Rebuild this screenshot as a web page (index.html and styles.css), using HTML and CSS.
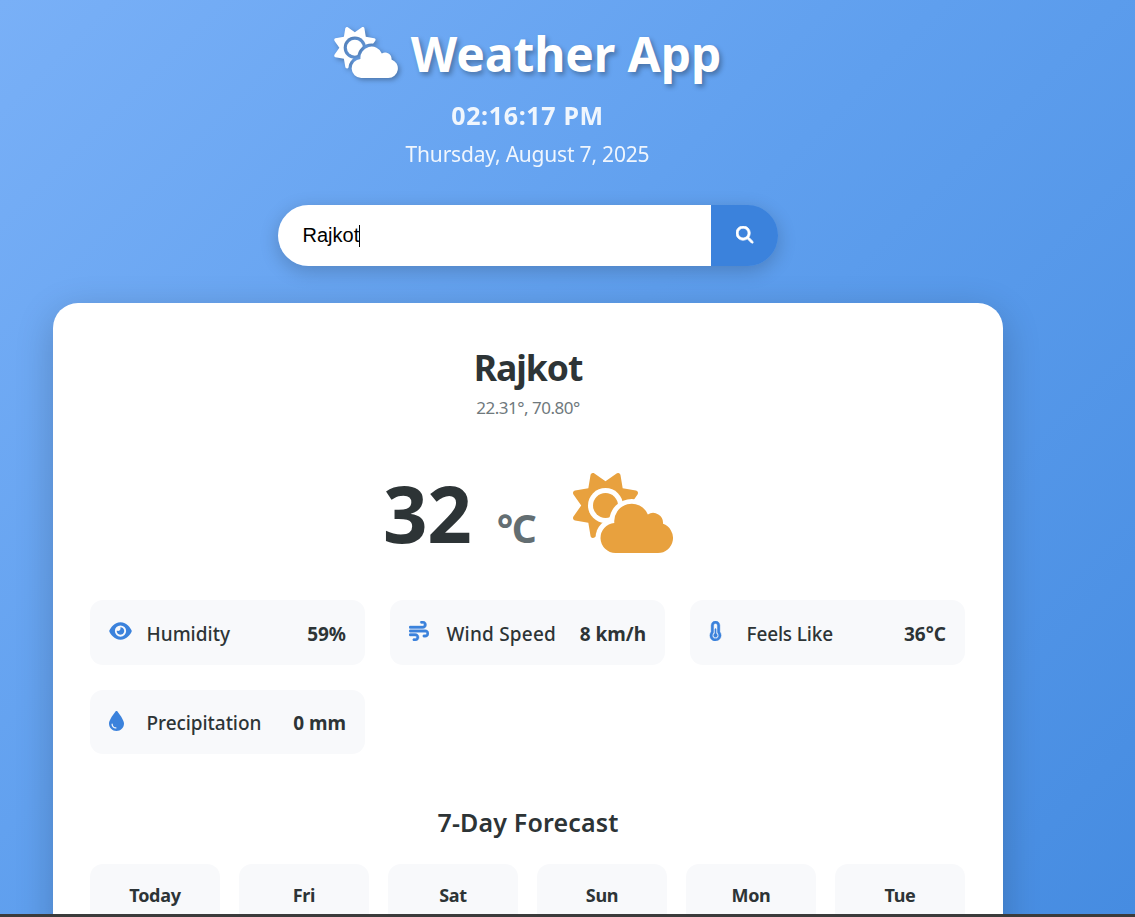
FILE: index.html
```html
<!DOCTYPE html>
<html lang="en">
<head>
<meta charset="utf-8">
<title>Weather App</title>
<link rel="stylesheet" href="styles.css">
</head>
<body>
<svg class="sprite" aria-hidden="true">
  <mask id="sun-cut" maskUnits="userSpaceOnUse" x="0" y="0" width="640" height="512">
    <rect width="640" height="512" fill="#fff"/>
    <circle cx="208" cy="208" r="112" fill="#000"/>
    <circle cx="272" cy="416" r="128" fill="#000"/>
    <circle cx="376" cy="310" r="144" fill="#000"/>
  </mask>
  <mask id="sun-disc-cut" maskUnits="userSpaceOnUse" x="0" y="0" width="640" height="512">
    <rect width="640" height="512" fill="#fff"/>
    <circle cx="376" cy="310" r="144" fill="#000"/>
  </mask>
  <symbol id="cloud-sun" viewBox="0 0 640 512">
    <path mask="url(#sun-cut)" d="M294.2 1.2c5.1 2.1 8.7 6.7 9.6 12.1l14.1 84.7 84.7 14.1c5.4 .9 10 4.5 12.1 9.6s1.5 10.9-1.6 15.4L363.5 208L208 363.5L137.2 413.1c-4.5 3.2-10.3 3.8-15.4 1.6s-8.7-6.7-9.6-12.1L98.1 317.9 13.4 303.8c-5.4-.9-10-4.5-12.1-9.6s-1.5-10.9 1.6-15.4L52.5 208 2.9 137.2c-3.2-4.5-3.8-10.3-1.6-15.4s6.7-8.7 12.1-9.6L98.1 98.1l14.1-84.7c.9-5.4 4.5-10 9.6-12.1s10.9-1.5 15.4 1.6L208 52.5 278.8 2.9c4.5-3.2 10.3-3.8 15.4-1.6z"/>
    <circle cx="208" cy="208" r="80" mask="url(#sun-disc-cut)"/>
    <path d="M272 512a96 96 0 0 1-7.5-191.7A112 112 0 0 1 479 265A64 64 0 0 1 576 325.5A96 96 0 0 1 544 512z"/>
  </symbol>
  <symbol id="search" viewBox="0 0 512 512"><path d="M416 208c0 45.9-14.9 88.3-40 122.7L502.6 457.4c12.5 12.5 12.5 32.8 0 45.3s-32.8 12.5-45.3 0L330.7 376c-34.4 25.2-76.8 40-122.7 40C93.1 416 0 322.9 0 208S93.1 0 208 0S416 93.1 416 208zM208 352a144 144 0 1 0 0-288 144 144 0 1 0 0 288z"/></symbol>
  <symbol id="eye" viewBox="0 0 576 512"><path d="M288 32c-80.8 0-145.5 36.8-192.6 80.6C48.6 156 17.3 208 2.5 243.7c-3.3 7.9-3.3 16.7 0 24.6C17.3 304 48.6 356 95.4 399.4C142.5 443.2 207.2 480 288 480s145.5-36.8 192.6-80.6c46.8-43.5 78.1-95.4 93-131.1c3.3-7.9 3.3-16.7 0-24.6c-14.9-35.7-46.2-87.7-93-131.1C433.5 68.8 368.8 32 288 32zM144 256a144 144 0 1 1 288 0 144 144 0 1 1 -288 0zm144-64c0 35.3-28.7 64-64 64c-7.1 0-13.9-1.2-20.3-3.3c-5.5-1.8-11.9 1.6-11.7 7.4c.3 6.9 1.3 13.8 3.2 20.7c13.7 51.2 66.4 81.6 117.6 67.9s81.6-66.4 67.9-117.6c-11.1-41.5-47.8-69.4-88.6-71.1c-5.8-.2-9.2 6.1-7.4 11.7c2.1 6.4 3.3 13.2 3.3 20.3z"/></symbol>
  <symbol id="wind" viewBox="0 0 512 512"><path d="M288 32c0 17.7 14.3 32 32 32l32 0c17.7 0 32 14.3 32 32s-14.3 32-32 32L32 128c-17.7 0-32 14.3-32 32s14.3 32 32 32l320 0c53 0 96-43 96-96s-43-96-96-96L320 0c-17.7 0-32 14.3-32 32zm64 352c0 17.7 14.3 32 32 32l32 0c53 0 96-43 96-96s-43-96-96-96L32 224c-17.7 0-32 14.3-32 32s14.3 32 32 32l384 0c17.7 0 32 14.3 32 32s-14.3 32-32 32l-32 0c-17.7 0-32 14.3-32 32zM128 512l32 0c53 0 96-43 96-96s-43-96-96-96L32 320c-17.7 0-32 14.3-32 32s14.3 32 32 32l128 0c17.7 0 32 14.3 32 32s-14.3 32-32 32l-32 0c-17.7 0-32 14.3-32 32s14.3 32 32 32z"/></symbol>
  <symbol id="thermometer" viewBox="0 0 320 512"><path d="M160 64c-26.5 0-48 21.5-48 48l0 164.5c0 17.3-7.1 31.9-15.3 42.5C86.2 332.6 80 349.5 80 368c0 44.2 35.8 80 80 80s80-35.8 80-80c0-18.5-6.2-35.4-16.7-48.9c-8.2-10.6-15.3-25.2-15.3-42.5L208 112c0-26.5-21.5-48-48-48zM48 112C48 50.2 98.1 0 160 0s112 50.1 112 112l0 164.4c0 .1 .1 .3 .2 .6c.2 .6 .8 1.6 1.7 2.8c18.9 24.4 30.1 55 30.1 88.1c0 79.5-64.5 144-144 144S16 447.5 16 368c0-33.2 11.2-63.8 30.1-88.1c.9-1.2 1.5-2.2 1.7-2.8c.1-.3 .2-.5 .2-.6L48 112zM208 368c0 26.5-21.5 48-48 48s-48-21.5-48-48c0-20.9 13.4-38.7 32-45.3L144 208c0-8.8 7.2-16 16-16s16 7.2 16 16l0 114.7c18.6 6.6 32 24.4 32 45.3z"/></symbol>
  <symbol id="droplet" viewBox="0 0 384 512"><path d="M192 512C86 512 0 426 0 320C0 228.8 130.2 57.7 166.6 11.7C172.6 4.2 181.5 0 191.1 0l1.8 0c9.6 0 18.5 4.2 24.5 11.7C253.8 57.7 384 228.8 384 320c0 106-86 192-192 192zM96 336c0-8.8-7.2-16-16-16s-16 7.2-16 16c0 61.9 50.1 112 112 112c8.8 0 16-7.2 16-16s-7.2-16-16-16c-44.2 0-80-35.8-80-80z"/></symbol>
</svg>
<div class="page">
  <div class="container">
    <header class="header">
      <h1 class="title"><svg class="title-icon"><use href="#cloud-sun"/></svg><span>Weather App</span></h1>
      <div class="time"><span>02:16:17 PM</span></div>
      <div class="date"><span>Thursday, August 7, 2025</span></div>
    </header>
    <div class="search">
      <div class="search-input">Rajkot<span class="caret"></span></div>
      <button class="search-btn" aria-label="Search"><svg><use href="#search"/></svg></button>
    </div>
    <main class="card">
      <h2 class="city"><span>Rajkot</span></h2>
      <p class="coords"><span>22.31°, 70.80°</span></p>
      <div class="current">
        <div class="temp">32</div>
        <div class="unit">°C</div>
        <svg class="current-icon"><use href="#cloud-sun"/></svg>
      </div>
      <div class="details">
        <div class="detail"><svg class="icon eye"><use href="#eye"/></svg><span class="label">Humidity</span><span class="value">59%</span></div>
        <div class="detail"><svg class="icon wind"><use href="#wind"/></svg><span class="label windspeed">Wind Speed</span><span class="value">8 km/h</span></div>
        <div class="detail"><svg class="icon thermo"><use href="#thermometer"/></svg><span class="label feels">Feels Like</span><span class="value">36°C</span></div>
        <div class="detail"><svg class="icon drop"><use href="#droplet"/></svg><span class="label precip">Precipitation</span><span class="value">0 mm</span></div>
      </div>
      <h3 class="forecast-title"><span>7-Day Forecast</span></h3>
      <div class="forecast">
        <div class="day">Today</div><div class="day">Fri</div><div class="day">Sat</div><div class="day">Sun</div><div class="day">Mon</div><div class="day">Tue</div>
      </div>
    </main>
  </div>
</div>
<div class="edge"></div>
</body>
</html>
```
FILE: styles.css
```css
* { box-sizing: border-box; margin: 0; padding: 0; }
body { height: 917px; overflow: hidden; display: flex; flex-direction: column; font-family: "Segoe UI", "Noto Sans", sans-serif; color: #2d3436; }
.sprite { position: absolute; width: 0; height: 0; }
.page { height: 914px; overflow: hidden; padding: 25px 0 0 53px; background: linear-gradient(135deg, #79b0f7 0%, #5f9fee 46%, #468ce1 100%); }
.edge { height: 3px; background: #3b3b3b; }
.container { width: 950px; }
.header { display: flex; flex-direction: column; align-items: center; color: #fff; padding-right: 1px; }
.title { display: flex; align-items: center; gap: 13px; height: 57px; font-size: 48px; font-weight: 700; line-height: 55px; letter-spacing: -0.1px; text-shadow: 2.5px 2.5px 5px rgba(0,0,0,.3); white-space: nowrap; }
.title-icon { width: 64px; height: 51px; margin-top: -3px; fill: #fff; filter: drop-shadow(2.5px 2.5px 2.5px rgba(0,0,0,.3)); }
.time { margin-top: 14px; height: 38px; line-height: 38px; font-size: 25px; font-weight: 700; opacity: .9; letter-spacing: 0.65px; }
.date { margin-top: 1px; height: 38px; line-height: 38px; font-size: 21px; opacity: .9; letter-spacing: -0.2px; }
.search { width: 500px; height: 61px; margin: 32px auto 37px; display: flex; border-radius: 31px; overflow: hidden; box-shadow: 0 5px 19px rgba(0,0,0,.2); }
.search-input { flex: 1; display: flex; align-items: center; padding-left: 24.5px; background: #fff; color: #000; font-family: Arial, "Liberation Sans", sans-serif; font-size: 20px; }
.caret { width: 1px; height: 22px; margin-left: -0.5px; background: #000; }
.search-btn { width: 67px; border: 0; background: #3b82dc; display: flex; align-items: center; justify-content: center; }
.search-btn svg { width: 17.5px; height: 17.5px; margin-bottom: 2px; fill: #fff; stroke: #fff; stroke-width: 22; overflow: visible; }
.card { height: 900px; padding: 37px; border-radius: 25px; background: #fff; box-shadow: 0 10px 38px rgba(0,0,0,.2); }
.city { height: 54px; line-height: 54px; text-align: center; font-size: 35.5px; font-weight: 700; letter-spacing: -1px; }
.coords { height: 28px; line-height: 28px; text-align: center; font-size: 17px; color: #6f797d; font-weight: 400; letter-spacing: -0.5px; }
.current { height: 102px; margin: 38px 0; display: flex; align-items: center; justify-content: center; }
.temp { font-size: 78px; font-weight: 700; line-height: 102px; margin-right: 25.5px; padding-top: 4px; letter-spacing: -0.5px; }
.unit { font-size: 39px; font-weight: 700; line-height: 54px; color: #636e72; margin: 34px 37.5px 0 0; letter-spacing: -1.5px; }
.current-icon { width: 100px; height: 80px; margin-top: 4px; fill: #e8a13e; }
.details { display: grid; grid-template-columns: repeat(3, 275px); gap: 25px; }
.detail { height: 64.5px; display: flex; align-items: center; padding: 3px 19px 0; border-radius: 13px; background: #f8f9fb; font-size: 19px; white-space: nowrap; }
.icon { height: 20px; fill: #3b82dc; margin-top: -5px; flex: none; }
.eye { width: 23px; margin-right: 14.5px; }
.wind { width: 20px; margin-right: 17.5px; }
.thermo { width: 13px; margin-right: 24.5px; }
.wind, .thermo { stroke: #3b82dc; stroke-width: 10; overflow: visible; }
.drop { width: 15px; margin-right: 22.5px; }
.label { font-weight: 500; }
.windspeed { letter-spacing: 0.2px; }
.feels { letter-spacing: -0.15px; }
.precip { letter-spacing: -0.06px; }
.value { margin-left: auto; font-weight: 700; }
.forecast-title { margin: 49px 0 23px; height: 38px; line-height: 38px; text-align: center; font-size: 25px; font-weight: 600; letter-spacing: 0.15px; }
.forecast { display: grid; grid-template-columns: repeat(6, 130px); gap: 19px; }
.day { height: 170px; padding-top: 18px; line-height: 27px; border-radius: 13px; background: #f8f9fb; text-align: center; font-size: 18px; font-weight: 700; letter-spacing: -0.3px; }
```
